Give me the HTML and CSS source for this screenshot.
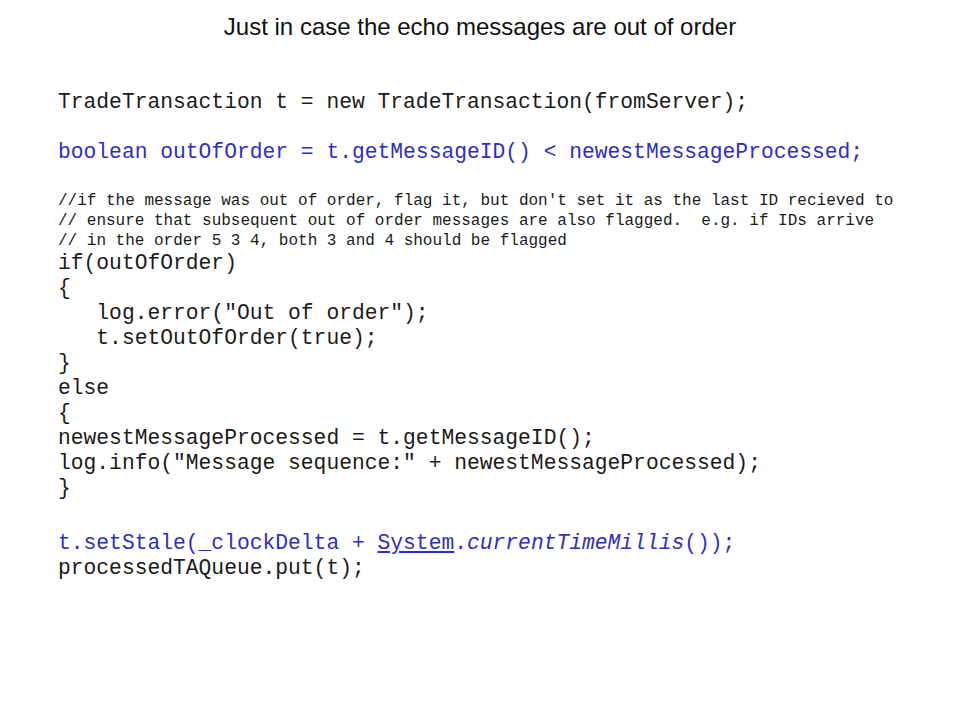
FILE: index.html
```html
<!DOCTYPE html>
<html lang="en">
<head>
  <meta charset="UTF-8" />
  <title>Just in case the echo messages are out of order</title>
  <link rel="stylesheet" href="styles.css">
</head>
<body>
  <div class="slide">
    <h1>Just in case the echo messages are out of order</h1>

    <div class="code">
      <div class="line">TradeTransaction t = new TradeTransaction(fromServer);</div>
      <div class="line blue gap">boolean outOfOrder = t.getMessageID() &lt; newestMessageProcessed;</div>

      <div class="comments">
        <div class="cline">//if the message was out of order, flag it, but don't set it as the last ID recieved to</div>
        <div class="cline">// ensure that subsequent out of order messages are also flagged.  e.g. if IDs arrive</div>
        <div class="cline">// in the order 5 3 4, both 3 and 4 should be flagged</div>
      </div>

      <div class="line">if(outOfOrder)</div>
      <div class="line">{</div>
      <div class="line">   log.error("Out of order");</div>
      <div class="line">   t.setOutOfOrder(true);</div>
      <div class="line">}</div>
      <div class="line">else</div>
      <div class="line">{</div>
      <div class="line">newestMessageProcessed = t.getMessageID();</div>
      <div class="line">log.info("Message sequence:" + newestMessageProcessed);</div>
      <div class="line">}</div>

      <div class="line blue last">t.setStale(_clockDelta + <u>System</u>.<i>currentTimeMillis</i>());</div>
      <div class="line">processedTAQueue.put(t);</div>
    </div>
  </div>
</body>
</html>
```

FILE: styles.css
```css
body {
  margin: 0;
  padding: 0;
  background: #ffffff;
  color: #1a1a1a;
}
.slide {
  width: 960px;
  height: 720px;
}
h1 {
  margin: 0;
  padding-top: 14px;
  text-align: center;
  font-family: "Liberation Sans", Arial, sans-serif;
  font-weight: normal;
  font-size: 24px;
  line-height: 26px;
  color: #111111;
}
.code {
  padding-left: 58px;
  padding-top: 50px;
  font-family: "Liberation Mono", "Courier New", monospace;
}
.line {
  white-space: pre;
  font-size: 21.3px;
  line-height: 25px;
}
.blue {
  color: #2e2ec4;
}
.gap {
  margin-top: 25px;
}
.comments {
  margin-top: 26px;
}
.cline {
  white-space: pre;
  font-size: 16px;
  line-height: 20px;
}
.last {
  margin-top: 30px;
}
```
